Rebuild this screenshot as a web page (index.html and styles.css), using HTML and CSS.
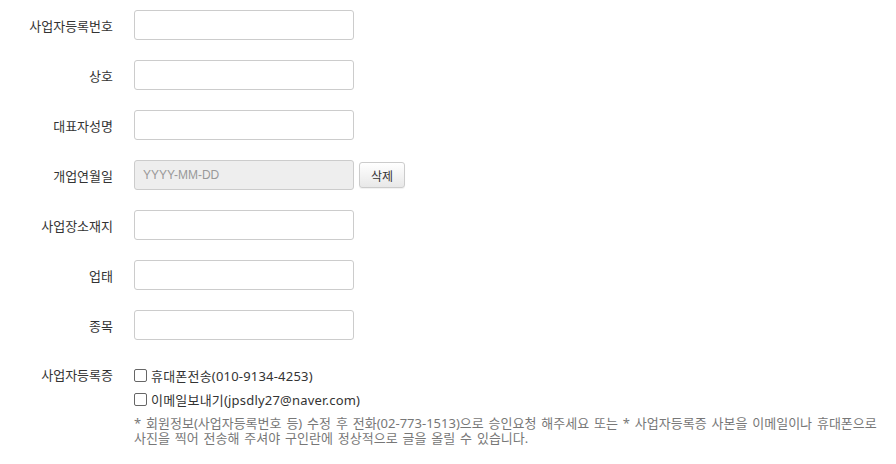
FILE: index.html
```html
<!DOCTYPE html>
<html lang="ko">
<head>
<meta charset="utf-8">
<link rel="stylesheet" href="styles.css">
</head>
<body>
<div class="form">
  <div class="row">
    <div class="label">사업자등록번호</div>
    <div class="field"><input class="inp" type="text"></div>
  </div>
  <div class="row">
    <div class="label">상호</div>
    <div class="field"><input class="inp" type="text"></div>
  </div>
  <div class="row">
    <div class="label">대표자성명</div>
    <div class="field"><input class="inp" type="text"></div>
  </div>
  <div class="row">
    <div class="label">개업연월일</div>
    <div class="field"><input class="inp disabled" type="text" placeholder="YYYY-MM-DD" disabled><button class="btn" type="button">삭제</button></div>
  </div>
  <div class="row">
    <div class="label">사업장소재지</div>
    <div class="field"><input class="inp" type="text"></div>
  </div>
  <div class="row">
    <div class="label">업태</div>
    <div class="field"><input class="inp" type="text"></div>
  </div>
  <div class="row">
    <div class="label">종목</div>
    <div class="field"><input class="inp" type="text"></div>
  </div>
  <div class="row row-top">
    <div class="label label-top">사업자등록증</div>
    <div class="field-col">
      <label class="opt opt-first"><span class="cb"></span>휴대폰전송(010-9134-4253)</label>
      <label class="opt opt-second"><span class="cb"></span>이메일보내기(jpsdly27@naver.com)</label>
      <p class="note">* 회원정보(사업자등록번호 등) 수정 후 전화(02-773-1513)으로 승인요청 해주세요 또는 * 사업자등록증 사본을 이메일이나 휴대폰으로 사진을 찍어 전송해 주셔야 구인란에 정상적으로 글을 올릴 수 있습니다.</p>
    </div>
  </div>
</div>
</body>
</html>
```

FILE: styles.css
```css
html, body {
  margin: 0;
  padding: 0;
  background: #fff;
}
body {
  font-family: "Noto Sans", "Noto Sans CJK KR", sans-serif;
  font-size: 13px;
  color: #333;
}
.form {
  padding-top: 10px;
  display: flex;
  flex-direction: column;
  gap: 20px;
}
.row {
  display: flex;
  align-items: center;
  height: 30px;
}
.row-top {
  align-items: flex-start;
  height: auto;
}
.label {
  width: 113px;
  padding-right: 21px;
  text-align: right;
  box-sizing: content-box;
  white-space: nowrap;
}
.label-top {
  line-height: 30px;
}
.field {
  display: flex;
  align-items: center;
  gap: 5px;
}
.inp {
  width: 220px;
  height: 30px;
  box-sizing: border-box;
  border: 1px solid #ccc;
  border-radius: 3px;
  background: #fff;
  padding: 0 8px;
  margin: 0;
  font-family: "Liberation Sans", Arial, sans-serif;
  font-size: 12px;
  color: #333;
  outline: none;
}
.inp.disabled {
  background: #eee;
}
.inp.disabled::placeholder {
  color: #999;
}
.btn {
  height: 26px;
  width: 46px;
  box-sizing: border-box;
  margin: 0;
  padding: 0;
  border: 1px solid #ccc;
  border-radius: 3px;
  background: linear-gradient(#fff, #e8e8e8);
  font-family: "Noto Sans CJK KR", sans-serif;
  font-size: 12px;
  color: #333;
  box-shadow: 0 1px 1px rgba(0,0,0,0.06);
}
.field-col {
  display: flex;
  flex-direction: column;
  width: 752px;
}
.opt {
  display: flex;
  align-items: center;
  white-space: nowrap;
  letter-spacing: 0.2px;
}
.opt-first {
  height: 30px;
}
.opt-second {
  height: 18px;
}
.cb {
  width: 13px;
  height: 13px;
  box-sizing: border-box;
  border: 1px solid #666;
  border-radius: 2px;
  background: #fff;
  margin-right: 4px;
  flex: none;
}
.note {
  margin: 8px 0 0;
  font-size: 13px;
  line-height: 15px;
  word-spacing: 1.5px;
  color: #777;
}
```
